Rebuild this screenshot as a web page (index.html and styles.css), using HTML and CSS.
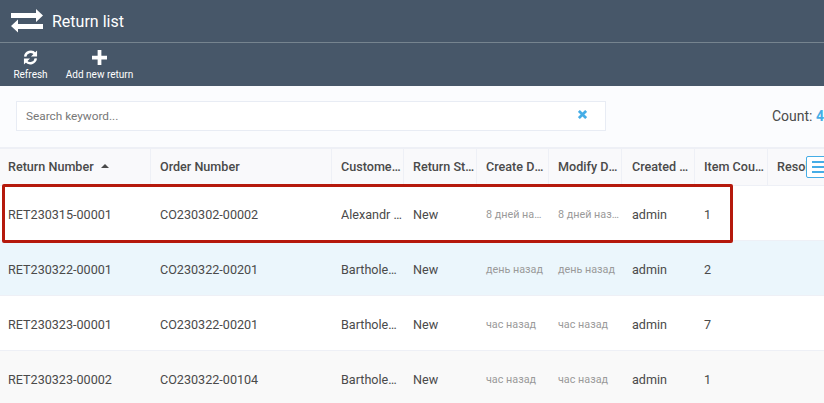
FILE: index.html
```html
<!DOCTYPE html>
<html lang="en">
<head>
    <meta charset="UTF-8">
    <meta name="viewport" content="width=device-width, initial-scale=1.0">
    <title>Return list</title>
    <link rel="stylesheet" href="styles.css">
</head>
<body>
    <header class="title-bar">
        <svg class="title-icon" viewBox="0 0 32 24" width="32" height="24">
            <path fill="#fff" d="M0 4h25V0l7 6.500-7 6.500V9H0z"/>
            <path fill="#fff" d="M32 15H7v-4.500L0 17l7 6.500V20h25z"/>
        </svg>
        <h1>Return list</h1>
    </header>

    <nav class="toolbar">
        <button class="tool tool-refresh">
            <svg viewBox="0 0 16 16" width="15" height="15">
                <path fill="none" stroke="#fff" stroke-width="2.600" d="M2.300 7A6 6 0 0 1 12.800 4M13.700 9A6 6 0 0 1 3.200 12"/>
                <path fill="#fff" d="M15 .5V7H8.500zM1 15.500V9h6.500z"/>
            </svg>
            <span>Refresh</span>
        </button>
        <button class="tool tool-add">
            <svg viewBox="0 0 16 16" width="15" height="15">
                <path fill="#fff" d="M6 0h4v6h6v4h-6v6H6v-6H0V6h6z"/>
            </svg>
            <span>Add new return</span>
        </button>
    </nav>

    <section class="search-area">
        <div class="search-box">
            <span class="placeholder">Search keyword...</span>
            <svg class="clear-icon" viewBox="0 0 10 10" width="9" height="9">
                <path stroke="#45ade6" stroke-width="3" d="M1 1l8 8M9 1l-8 8"/>
            </svg>
        </div>
        <div class="count">Count: <b>4</b></div>
    </section>

    <main class="grid">
        <div class="row head">
            <div>Return Number <i class="sort"></i></div>
            <div>Order Number</div>
            <div><span>Customer Name</span></div>
            <div><span>Return Status</span></div>
            <div><span>Create Date</span></div>
            <div><span>Modify Date</span></div>
            <div><span>Created By User</span></div>
            <div><span>Item Count Total</span></div>
            <div class="clip">Resolution</div>
        </div>
        <div class="row">
            <div>RET230315-00001</div>
            <div>CO230302-00002</div>
            <div><span>Alexandr Mikhailov</span></div>
            <div>New</div>
            <div class="date"><span>8 дней назад</span></div>
            <div class="date"><span>8 дней назад</span></div>
            <div>admin</div>
            <div>1</div>
            <div></div>
        </div>
        <div class="row blue">
            <div>RET230322-00001</div>
            <div>CO230322-00201</div>
            <div><span>Bartholemew</span></div>
            <div>New</div>
            <div class="date">день назад</div>
            <div class="date">день назад</div>
            <div>admin</div>
            <div>2</div>
            <div></div>
        </div>
        <div class="row">
            <div>RET230323-00001</div>
            <div>CO230322-00201</div>
            <div><span>Bartholemew</span></div>
            <div>New</div>
            <div class="date">час назад</div>
            <div class="date">час назад</div>
            <div>admin</div>
            <div>7</div>
            <div></div>
        </div>
        <div class="row grey">
            <div>RET230323-00002</div>
            <div>CO230322-00104</div>
            <div><span>Bartholemew</span></div>
            <div>New</div>
            <div class="date">час назад</div>
            <div class="date">час назад</div>
            <div>admin</div>
            <div>1</div>
            <div></div>
        </div>

        <div class="highlight"></div>
        <button class="columns-btn"><i></i><i></i><i></i></button>
    </main>
</body>
</html>
```
FILE: styles.css
```css
/* Page */
html, body {
    height: 403px;
    overflow: hidden;
}

body {
    margin: 0;
    font-family: Roboto, "Liberation Sans", sans-serif;
    background-color: #fbfcfe;
    color: #4a4a4a;
}

/* Dark header */
.title-bar {
    display: flex;
    align-items: center;
    height: 42px;
    padding-left: 11px;
    background-color: #475769;
    border-bottom: 1px solid #76848f;
}

.title-icon {
    display: block;
    margin-right: 9px;
}

.title-bar h1 {
    margin: 0;
    font-size: 16px;
    font-weight: 400;
    color: #fff;
}

.toolbar {
    display: flex;
    height: 43px;
    background-color: #475769;
}

.tool {
    display: flex;
    flex-direction: column;
    align-items: center;
    padding: 7px 0 0;
    border: none;
    background: none;
    color: #fff;
    font-family: inherit;
    font-size: 10px;
}

.tool svg {
    display: block;
    margin-bottom: 4px;
}

.tool-refresh {
    width: 61px;
}

.tool-add {
    width: 77px;
}

/* Search */
.search-area {
    display: flex;
    align-items: flex-start;
    height: 61px;
    padding: 15px 0 0 16px;
    box-sizing: border-box;
}

.search-box {
    display: flex;
    align-items: center;
    justify-content: space-between;
    width: 590px;
    height: 30px;
    box-sizing: border-box;
    padding: 0 18px 0 9px;
    background-color: #fff;
    border: 1px solid #e8ecf4;
    font-size: 11.800px;
    color: #777;
}

.clear-icon {
    margin-bottom: 3px;
}

.count {
    margin-left: 166px;
    line-height: 30px;
    font-size: 14px;
    white-space: nowrap;
}

.count b {
    color: #45ade6;
}

/* Table */
.grid {
    position: relative;
    border-top: 2px solid #eef0f6;
}

.row {
    display: grid;
    grid-template-columns: 151px 181px 72px 73px 72px 73px 73px 73px 56px;
    height: 55px;
    box-sizing: border-box;
    border-bottom: 1px solid #eef0f6;
    background-color: #fff;
    font-size: 12.600px;
}

.row > div {
    display: flex;
    align-items: center;
    padding-top: 2px;
    padding-left: 9px;
    overflow: hidden;
    white-space: nowrap;
    min-width: 0;
}

.row > div:first-child {
    padding-left: 8px;
}

.row > div:nth-child(7) {
    padding-left: 10px;
}

.row span {
    overflow: hidden;
    text-overflow: ellipsis;
}

.head {
    height: 37px;
    background-color: #f9f9fb;
    font-size: 12.600px;
    font-weight: 500;
}

.head > div {
    padding-top: 0;
    padding-bottom: 2px;
    border-right: 1px solid #eef0f6;
}

.head .clip {
    border-right: none;
}

.sort {
    display: inline-block;
    margin-left: 7px;
    border-left: 4px solid transparent;
    border-right: 4px solid transparent;
    border-bottom: 4px solid #4a4a4a;
}

.blue {
    background-color: #ebf6fc;
}

.grey {
    background-color: #f9f9f9;
}

.row .date {
    padding-right: 3px;
    font-size: 10.800px;
    color: #9a9a9a;
}

/* Red box drawn over the first row */
.highlight {
    position: absolute;
    left: 2px;
    top: 35px;
    width: 731px;
    height: 59px;
    box-sizing: border-box;
    border: 3px solid #b5190c;
    border-radius: 2px;
}

.columns-btn {
    position: absolute;
    left: 806px;
    top: 7px;
    display: flex;
    flex-direction: column;
    gap: 3px;
    width: 24px;
    height: 22px;
    box-sizing: border-box;
    padding: 4px 0 0 5px;
    background-color: #fff;
    border: 1px solid #45ade6;
    border-radius: 2px;
}

.columns-btn i {
    display: block;
    width: 14px;
    height: 2px;
    background-color: #45ade6;
}
```
